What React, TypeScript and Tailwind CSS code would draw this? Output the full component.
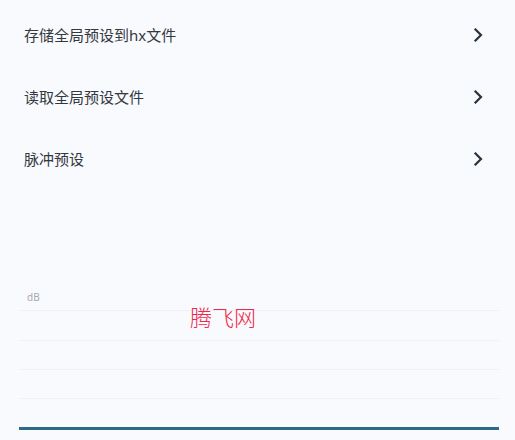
import React from 'react';

const items = ['存储全局预设到hx文件', '读取全局预设文件', '脉冲预设'];

function Chevron() {
  return (
    <svg width="14" height="14" viewBox="0 0 14 14" fill="none">
      <path d="M4.5 1.5 L10 7 L4.5 12.5" stroke="#263340" strokeWidth="2.2" strokeLinecap="square" />
    </svg>
  );
}

export default function App() {
  return (
    <div
      className="w-[515px] h-[440px] bg-[#f9fafd] overflow-hidden"
      style={{ fontFamily: '"Noto Sans", "Noto Sans CJK SC", sans-serif' }}
    >
      {/* Menu */}
      <div className="pt-[4px]">
        {items.map((label) => (
          <div key={label} className="h-[62px] flex items-center justify-between pl-6 pr-[30px]">
            <span className="text-[15px] text-[#333840]">{label}</span>
            <Chevron />
          </div>
        ))}
      </div>

      {/* Chart */}
      <div className="relative mt-[100px] ml-[19px] w-[480px]">
        <div className="h-[20px] pl-2 text-[10px] leading-[14px] text-[#a6a9ae]">dB</div>
        <div className="h-[30px] border-t border-[#eef0f4]" />
        <div className="h-[29px] border-t border-[#eef0f4]" />
        <div className="h-[29px] border-t border-[#eef0f4]" />
        <div className="h-[29px] border-t border-[#eef0f4]" />
        <div className="h-[3px] bg-[#2c6b84]" />
        <div
          className="absolute left-[171px] top-[13px] text-[22px] leading-[26px] font-light text-[#f0284a]"
          style={{ fontFamily: '"Noto Sans CJK SC", sans-serif' }}
        >
          腾飞网
        </div>
      </div>
    </div>
  );
}
